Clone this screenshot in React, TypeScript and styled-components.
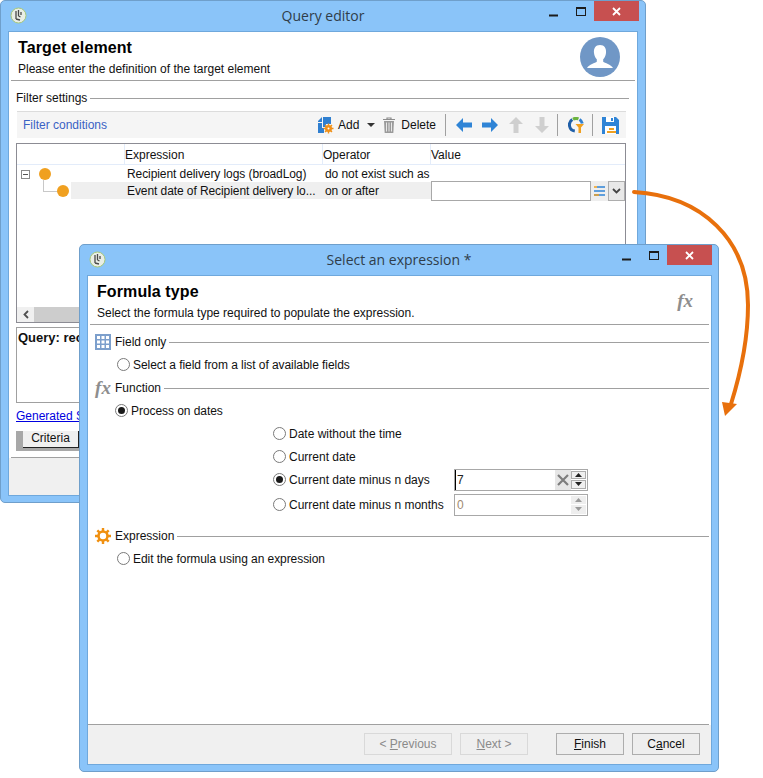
import React from 'react';
import styled, { createGlobalStyle } from 'styled-components';

const GlobalStyle = createGlobalStyle`
  html, body {
    margin: 0;
    padding: 0;
    background: #fff;
  }
  body {
    font-family: "Liberation Sans", "Noto Sans", sans-serif;
    font-size: 12px;
    color: #111;
  }
`;

const Desktop = styled.div`
  position: relative;
  width: 763px;
  height: 778px;
  overflow: hidden;
`;

const Window = styled.div<{ $x: number; $y: number; $w: number; $h: number }>`
  position: absolute;
  left: ${(p) => p.$x}px;
  top: ${(p) => p.$y}px;
  width: ${(p) => p.$w}px;
  height: ${(p) => p.$h}px;
  box-sizing: border-box;
  display: flex;
  flex-direction: column;
  background: #8ac4f9;
  border: 1px solid #6f9fcb;
  border-radius: 5px;
`;

const TitleBar = styled.div`
  flex: none;
  height: 30px;
  display: grid;
  grid-template-columns: 1fr auto 1fr;
  padding: 0 6px;
`;

const AppIcon = styled.svg`
  width: 17px;
  height: 17px;
  margin: 6px 0 0 3px;
`;

const WindowTitle = styled.div`
  font-family: "Open Sans", "Noto Sans", sans-serif;
  font-size: 14px;
  line-height: 30px;
  color: #2f3d4a;
`;

const Controls = styled.div`
  display: flex;
  justify-content: flex-end;
  align-items: flex-start;
`;

const ControlButton = styled.div<{ $close?: boolean }>`
  width: ${(p) => (p.$close ? 45 : 27)}px;
  height: 20px;
  display: flex;
  align-items: center;
  justify-content: center;
  background: ${(p) => (p.$close ? '#c75050' : 'transparent')};
`;

const Client = styled.div<{ $right: number }>`
  flex: 1;
  min-height: 0;
  display: flex;
  flex-direction: column;
  margin: 0 ${(p) => p.$right}px 6px 7px;
  background: #fff;
  border: 1px solid #6fa8dc;
`;

const Banner = styled.div`
  flex: none;
  height: 49px;
  margin: 0 2px;
  padding: 0 7px;
  box-sizing: border-box;
  display: flex;
  justify-content: space-between;
  border-bottom: 1px solid #a0a0a0;
`;

const BannerTitle = styled.div`
  font-size: 16px;
  font-weight: 700;
  letter-spacing: 0.1px;
  line-height: 20px;
  margin-top: 6px;
  color: #000;
`;

const BannerText = styled.div`
  line-height: 16px;
  margin-top: 3px;
`;

const Avatar = styled.svg`
  width: 40px;
  height: 40px;
  margin: 5px 8px 0 0;
`;

const FxMark = styled.span<{ $size: number }>`
  font-family: "Liberation Serif", serif;
  font-style: italic;
  font-weight: 700;
  font-size: ${(p) => p.$size}px;
  line-height: 16px;
  color: #8e8e8e;
`;

const BannerFx = styled.div`
  margin: 17px 9px 0 0;
`;

const QueryBody = styled.div`
  flex: 1;
  min-height: 0;
  display: flex;
  flex-direction: column;
  padding: 0 8px 0 7px;
`;

const Legend = styled.div`
  flex: none;
  height: 19px;
  margin: 7px 0 1px;
  display: flex;
  align-items: center;
  gap: 3px;
  &::after {
    content: '';
    flex: 1;
    margin-top: 2px;
    border-top: 1px solid #a0a0a0;
  }
`;

const Toolbar = styled.div`
  flex: none;
  height: 26px;
  margin: 3px 3px 0 1px;
  padding-left: 6px;
  display: flex;
  align-items: center;
  background: #f5f5f5;
  border-top: 1px solid #dcdcdc;
`;

const ToolbarTitle = styled.span`
  flex: 1;
  color: #3a62c4;
`;

const ToolGroup = styled.div`
  display: flex;
  align-items: center;
  padding-right: 7px;
`;

const ToolLabel = styled.span<{ $left: number }>`
  margin-left: ${(p) => p.$left}px;
`;

const ToolIcon = styled.svg<{ $left: number }>`
  flex: none;
  margin-left: ${(p) => p.$left}px;
`;

const ToolSep = styled.div<{ $left: number }>`
  flex: none;
  width: 1px;
  height: 22px;
  margin-left: ${(p) => p.$left}px;
  background: #a0a0a0;
`;

const Table = styled.div`
  flex: none;
  height: 180px;
  margin: 5px 3px 0 0;
  box-sizing: border-box;
  display: flex;
  flex-direction: column;
  border: 1px solid #8c8c94;
`;

const ColumnGrid = styled.div`
  display: grid;
  grid-template-columns: 108px 198px 108px 1fr;
`;

const HeaderRow = styled(ColumnGrid)`
  flex: none;
  height: 20px;
  grid-template-rows: 20px;
  align-items: stretch;
  border-bottom: 1px solid #e3ecfa;
`;

const HeaderCell = styled.div<{ $last?: boolean }>`
  line-height: 22px;
  border-right: ${(p) => (p.$last ? 'none' : '1px solid #e3ecfa')};
`;

const DataRow = styled(ColumnGrid)`
  flex: none;
  height: 17px;
  grid-template-rows: 17px;
  line-height: 19px;
`;

const TreeCell = styled.div`
  position: relative;
`;

const Cell = styled.div<{ $selected?: boolean }>`
  padding-left: 2px;
  white-space: nowrap;
  letter-spacing: -0.08px;
  background: ${(p) => (p.$selected ? '#efefef' : 'transparent')};
`;

const TreeSelection = styled.div`
  position: absolute;
  left: 54px;
  top: 0;
  right: 0;
  bottom: 0;
  background: #efefef;
`;

const Expander = styled.div`
  position: absolute;
  left: 4px;
  top: 5px;
  width: 9px;
  height: 9px;
  box-sizing: border-box;
  border: 1px solid #8a8a8a;
  &::after {
    content: '';
    position: absolute;
    left: 1px;
    right: 1px;
    top: 3px;
    border-top: 1px solid #555;
  }
`;

const StatusDot = styled.div<{ $left: number }>`
  position: absolute;
  left: ${(p) => p.$left}px;
  top: 3px;
  width: 12px;
  height: 12px;
  border-radius: 50%;
  background: #f0a020;
`;

const TreeLink = styled.div`
  position: absolute;
  left: 26px;
  top: -2px;
  width: 14px;
  height: 11px;
  border-left: 1px solid #c8c8c8;
  border-bottom: 1px solid #c8c8c8;
`;

const ValueCell = styled.div`
  display: flex;
  height: 20px;
  margin-top: -1px;
`;

const ValueInput = styled.div`
  width: 160px;
  box-sizing: border-box;
  background: #fff;
  border: 1px solid #a8a8a8;
`;

const ValueHelper = styled.div`
  width: 17px;
  display: flex;
  align-items: center;
  justify-content: center;
  background: #eee;
`;

const ValueDrop = styled.div`
  width: 17px;
  box-sizing: border-box;
  display: flex;
  align-items: center;
  justify-content: center;
  background: #e8e8e8;
  border: 1px solid #adadad;
`;

const TableFill = styled.div`
  flex: 1;
`;

const ScrollTrack = styled.div`
  flex: none;
  height: 15px;
  display: flex;
  background: #cdcdcd;
`;

const ScrollButton = styled.div`
  width: 17px;
  display: flex;
  align-items: center;
  justify-content: center;
  background: #f0f0f0;
`;

const QueryBox = styled.div`
  flex: none;
  height: 76px;
  margin: 4px 3px 0 0;
  padding: 2px 1px;
  box-sizing: border-box;
  border: 1px solid #a0a0a0;
  font-size: 13px;
  line-height: 15px;
  font-weight: 700;
`;

const LinkText = styled.a`
  flex: none;
  margin-top: 4px;
  line-height: 18px;
  color: #0000e0;
  text-decoration: underline;
`;

const TabStrip = styled.div`
  flex: none;
  height: 20px;
  margin: 6px 3px 0 0;
  padding-left: 7px;
  background: #a8a8a8;
`;

const TabButton = styled.div`
  width: 56px;
  height: 17px;
  box-sizing: border-box;
  text-align: center;
  line-height: 15px;
  background: #f0f0f0;
  border-right: 1px solid #222;
  border-bottom: 1px solid #222;
`;

const Rule = styled.div`
  flex: none;
  margin: 6px -5px 0 -5px;
  border-top: 1px solid #a0a0a0;
`;

const Footer = styled.div`
  flex: 1;
  margin: 0 -8px 0 -7px;
  background: #f0f0f0;
`;

const ExpressionBody = styled.div`
  flex: 1;
  min-height: 0;
  padding: 5px 2px 0 7px;
`;

const SectionRow = styled.div<{ $top?: number }>`
  height: 23px;
  margin-top: ${(p) => p.$top ?? 0}px;
  display: flex;
  align-items: center;
  &::after {
    content: '';
    flex: 1;
    margin: 2px 0 0 3px;
    border-top: 1px solid #a0a0a0;
  }
`;

const SectionIcon = styled.div`
  width: 16px;
  height: 16px;
  margin-right: 4px;
  display: flex;
  align-items: center;
  justify-content: center;
`;

const OptionRow = styled.div<{ $left: number; $gap: number }>`
  height: 23px;
  padding-left: ${(p) => p.$left}px;
  display: flex;
  align-items: center;
  gap: ${(p) => p.$gap}px;
  letter-spacing: -0.06px;
`;

const Radio = styled.span<{ $on?: boolean }>`
  flex: none;
  position: relative;
  width: 13px;
  height: 13px;
  box-sizing: border-box;
  border-radius: 50%;
  border: 1px solid #7a7a7a;
  background: #fff;
  &::after {
    content: '';
    display: ${(p) => (p.$on ? 'block' : 'none')};
    position: absolute;
    left: 2px;
    top: 2px;
    width: 7px;
    height: 7px;
    border-radius: 50%;
    background: #1a1a1a;
  }
`;

const SubRow = styled.div<{ $top?: number }>`
  height: 23px;
  margin: ${(p) => p.$top ?? 0}px 0 0 178px;
  width: 315px;
  display: grid;
  grid-template-columns: 13px 1fr 134px;
  column-gap: 3px;
  align-items: center;
  white-space: nowrap;
`;

const SpinField = styled.div`
  height: 22px;
  box-sizing: border-box;
  display: flex;
  align-items: stretch;
  border: 1px solid #a8a8a8;
`;

const SpinValue = styled.div<{ $muted?: boolean }>`
  flex: 1;
  padding-left: 2px;
  line-height: 20px;
  color: ${(p) => (p.$muted ? '#a08a70' : '#222')};
  ${(p) => (p.$muted ? '' : 'box-shadow: inset 2px 0 0 -1px #000;')}
`;

const SpinClear = styled.div`
  width: 16px;
  display: flex;
  align-items: center;
  justify-content: center;
  background: #e6e6e6;
`;

const SpinButtons = styled.div`
  width: 16px;
  display: flex;
  flex-direction: column;
  gap: 1px;
  padding: 1px 1px 1px 0;
  box-sizing: border-box;
`;

const SpinButton = styled.div<{ $off?: boolean }>`
  flex: 1;
  display: flex;
  align-items: center;
  justify-content: center;
  background: ${(p) => (p.$off ? '#eee' : '#f0f0f0')};
  border: ${(p) => (p.$off ? 'none' : '1px solid #adadad')};
`;

const DialogFooter = styled.div`
  flex: none;
  height: 39px;
  box-sizing: border-box;
  padding: 8px 11px 0 0;
  display: flex;
  justify-content: flex-end;
  background: #f0f0f0;
`;

const FooterRule = styled.div`
  flex: none;
  margin: 0 2px 0 0;
  border-top: 1px solid #a0a0a0;
`;

const DialogButton = styled.div<{ $w: number; $off?: boolean; $left: number }>`
  width: ${(p) => p.$w}px;
  height: 22px;
  margin-left: ${(p) => p.$left}px;
  box-sizing: border-box;
  text-align: center;
  line-height: 20px;
  color: ${(p) => (p.$off ? '#8a8a8a' : '#111')};
  background: ${(p) => (p.$off ? '#efefef' : '#eee')};
  border: 1px solid ${(p) => (p.$off ? '#d9d9d9' : '#adadad')};
`;

const ArrowOverlay = styled.svg`
  position: absolute;
  left: 0;
  top: 0;
  width: 763px;
  height: 778px;
  pointer-events: none;
`;

function CampaignIcon() {
  return (
    <AppIcon viewBox="0 0 17 17">
      <circle cx="8.5" cy="8.5" r="7.5" fill="#e9eee6" stroke="#a7c878" />
      <path d="M6 4v8M8.5 3v6M8.5 9l2 1M6 12l4 1M11 5v3" stroke="#4a4a4a" strokeWidth="1.3" fill="none" />
    </AppIcon>
  );
}

function WindowControls() {
  return (
    <Controls>
      <ControlButton>
        <svg width="9" height="3" viewBox="0 0 9 3" style={{ marginTop: 9 }}>
          <rect width="9" height="2" y="0.5" fill="#1c1c1c" />
        </svg>
      </ControlButton>
      <ControlButton>
        <svg width="10" height="9" viewBox="0 0 10 9">
          <rect x="0.5" y="0.5" width="9" height="8" fill="none" stroke="#1c1c1c" />
          <rect y="0" width="10" height="2" fill="#1c1c1c" />
        </svg>
      </ControlButton>
      <ControlButton $close>
        <svg width="9" height="9" viewBox="0 0 9 9">
          <path d="M1 1l7 7M8 1l-7 7" stroke="#fff" strokeWidth="1.8" />
        </svg>
      </ControlButton>
    </Controls>
  );
}

function AddIcon() {
  return (
    <ToolIcon $left={0} width="16" height="17" viewBox="0 0 16 17">
      <path d="M0 4l4-4v5H0zM5 0h8v7H8v3H5zM0 6h4v5h2v5H0z" fill="#2f7fd0" />
      <path d="M10.5 6.500v10M5.500 11.500h10M7 8l7 7M14 8l-7 7" stroke="#f09018" strokeWidth="1.400" />
      <circle cx="10.500" cy="11.500" r="3.500" fill="#f09018" />
      <circle cx="10.500" cy="11.500" r="1" fill="#fff" />
    </ToolIcon>
  );
}

function TrashIcon() {
  return (
    <ToolIcon $left={7} width="14" height="16" viewBox="0 0 14 16">
      <path d="M1 2.500h12M5 2.500V1h4v1.500" stroke="#8c8c8c" strokeWidth="1.200" fill="none" />
      <path d="M2 4h10l-.7 12H2.700z" fill="#9a9a9a" />
      <path d="M4.500 5.500v9M7 5.500v9M9.500 5.500v9" stroke="#e8e8e8" strokeWidth="1" />
    </ToolIcon>
  );
}

function MoveArrow({ left, turn, color }: { left: number; turn: number; color: string }) {
  return (
    <ToolIcon $left={left} width="16" height="16" viewBox="0 0 16 16">
      <path transform={`rotate(${turn} 8 8)`} d="M0 8l7-7v4.500h9v5H7V15z" fill={color} />
    </ToolIcon>
  );
}

function FilterIcon() {
  return (
    <ToolIcon $left={10} width="16" height="16" viewBox="0 0 16 16">
      <path d="M4.300 2.600a6.300 6.300 0 0 0 2.500 11.500" stroke="#1f5fa8" strokeWidth="3" fill="none" />
      <path d="M5 2.200a6.300 6.300 0 0 1 5.500-.3" stroke="#6cb33f" strokeWidth="3" fill="none" />
      <path d="M11.500 2.500a6.300 6.300 0 0 1 2.800 4" stroke="#2f7fd0" strokeWidth="3" fill="none" />
      <path d="M7.500 7H16l-3 3.500V16h-2.500v-5.500z" fill="#f0a020" />
    </ToolIcon>
  );
}

function SaveIcon() {
  return (
    <ToolIcon $left={9} width="17" height="17" viewBox="0 0 17 17">
      <path d="M0 0h14l3 3v14H0z" fill="#2f84d6" />
      <rect x="4" y="0" width="8" height="5" fill="#fff" />
      <rect x="9" y="1" width="2" height="3" fill="#2f84d6" />
      <rect x="3" y="9" width="11" height="8" fill="#fff" />
      <path d="M7 12h5M5 15h9" stroke="#f0a020" strokeWidth="1.800" />
    </ToolIcon>
  );
}

function Caret({ color = '#333', flip }: { color?: string; flip?: boolean }) {
  return (
    <svg width="7" height="4" viewBox="0 0 7 4">
      <path d={flip ? 'M0 4h7L3.500 0z' : 'M0 0h7L3.500 4z'} fill={color} />
    </svg>
  );
}

function GridIcon() {
  return (
    <svg width="16" height="16" viewBox="0 0 16 16">
      <rect width="16" height="16" fill="#7c9fcc" />
      <path d="M2 2h3v3H2zM6.500 2h3v3h-3zM11 2h3v3h-3zM2 6.500h3v3H2zM6.500 6.500h3v3h-3zM11 6.500h3v3h-3zM2 11h3v3H2zM6.500 11h3v3h-3zM11 11h3v3h-3z" fill="#fff" />
    </svg>
  );
}

function GearIcon() {
  return (
    <svg width="16" height="16" viewBox="0 0 16 16">
      <circle cx="8" cy="8" r="4.500" fill="none" stroke="#f09010" strokeWidth="2.600" />
      <path d="M8 0v3M8 13v3M0 8h3M13 8h3M2.300 2.300l2.100 2.100M11.600 11.600l2.100 2.100M13.700 2.300l-2.100 2.100M4.400 11.600l-2.100 2.100" stroke="#f09010" strokeWidth="2.400" />
    </svg>
  );
}

function QueryEditor() {
  return (
    <Window $x={0} $y={0} $w={646} $h={503}>
      <TitleBar>
        <CampaignIcon />
        <WindowTitle>Query editor</WindowTitle>
        <WindowControls />
      </TitleBar>
      <Client $right={7}>
        <Banner>
          <div>
            <BannerTitle>Target element</BannerTitle>
            <BannerText>Please enter the definition of the target element</BannerText>
          </div>
          <Avatar viewBox="0 0 40 40">
            <circle cx="20" cy="20" r="20" fill="#7097c6" />
            <path d="M20 8c-4.500 0-6.500 3.500-6 8 .3 3 1.500 5 2.800 6.300v2.400c-1.500 1.300-7.800 2.600-9.800 6.300h26c-2-3.700-8.300-5-9.800-6.300v-2.400c1.300-1.300 2.500-3.300 2.800-6.300.5-4.500-1.500-8-6-8z" fill="#fff" />
          </Avatar>
        </Banner>
        <QueryBody>
          <Legend>Filter settings</Legend>
          <Toolbar>
            <ToolbarTitle>Filter conditions</ToolbarTitle>
            <ToolGroup>
              <AddIcon />
              <ToolLabel $left={4}>Add</ToolLabel>
              <ToolIcon $left={8} width="8" height="4" viewBox="0 0 8 4">
                <path d="M0 0h8L4 4z" fill="#333" />
              </ToolIcon>
              <TrashIcon />
              <ToolLabel $left={5}>Delete</ToolLabel>
              <ToolSep $left={9} />
              <MoveArrow left={10} turn={0} color="#2f84d6" />
              <MoveArrow left={10} turn={180} color="#2f84d6" />
              <MoveArrow left={10} turn={90} color="#cfcfcf" />
              <MoveArrow left={10} turn={270} color="#cfcfcf" />
              <ToolSep $left={7} />
              <FilterIcon />
              <ToolSep $left={8} />
              <SaveIcon />
            </ToolGroup>
          </Toolbar>
          <Table>
            <HeaderRow>
              <HeaderCell />
              <HeaderCell>Expression</HeaderCell>
              <HeaderCell>Operator</HeaderCell>
              <HeaderCell $last>Value</HeaderCell>
            </HeaderRow>
            <DataRow>
              <TreeCell>
                <Expander />
                <StatusDot $left={22} />
              </TreeCell>
              <Cell>Recipient delivery logs (broadLog)</Cell>
              <Cell>do not exist such as</Cell>
              <Cell />
            </DataRow>
            <DataRow>
              <TreeCell>
                <TreeSelection />
                <TreeLink />
                <StatusDot $left={40} />
              </TreeCell>
              <Cell $selected>Event date of Recipient delivery lo...</Cell>
              <Cell $selected>on or after</Cell>
              <ValueCell>
                <ValueInput />
                <ValueHelper>
                  <svg width="11" height="10" viewBox="0 0 11 10">
                    <path d="M3 1h8M0 5h11M0 9h11" stroke="#2f84d6" strokeWidth="1.600" />
                    <path d="M0 1h3M0 9h5" stroke="#f0a020" strokeWidth="1.600" />
                  </svg>
                </ValueHelper>
                <ValueDrop>
                  <svg width="9" height="6" viewBox="0 0 9 6">
                    <path d="M1 1l3.500 3.500L8 1" stroke="#444" strokeWidth="1.800" fill="none" />
                  </svg>
                </ValueDrop>
              </ValueCell>
            </DataRow>
            <TableFill />
            <ScrollTrack>
              <ScrollButton>
                <svg width="6" height="9" viewBox="0 0 6 9">
                  <path d="M5 1L1.500 4.500 5 8" stroke="#505050" strokeWidth="1.800" fill="none" />
                </svg>
              </ScrollButton>
            </ScrollTrack>
          </Table>
          <QueryBox>Query: reci</QueryBox>
          <LinkText>Generated SQL</LinkText>
          <TabStrip>
            <TabButton>Criteria</TabButton>
          </TabStrip>
          <Rule />
          <Footer />
        </QueryBody>
      </Client>
    </Window>
  );
}

function SpinArrows({ off }: { off?: boolean }) {
  const color = off ? '#9a9a9a' : '#222';
  return (
    <SpinButtons>
      <SpinButton $off={off}>
        <Caret color={color} flip />
      </SpinButton>
      <SpinButton $off={off}>
        <Caret color={color} />
      </SpinButton>
    </SpinButtons>
  );
}

function SelectExpression() {
  return (
    <Window $x={79} $y={244} $w={640} $h={528}>
      <TitleBar>
        <CampaignIcon />
        <WindowTitle>Select an expression *</WindowTitle>
        <WindowControls />
      </TitleBar>
      <Client $right={6}>
        <Banner>
          <div>
            <BannerTitle>Formula type</BannerTitle>
            <BannerText>Select the formula type required to populate the expression.</BannerText>
          </div>
          <BannerFx>
            <FxMark $size={19}>fx</FxMark>
          </BannerFx>
        </Banner>
        <ExpressionBody>
          <SectionRow>
            <SectionIcon>
              <GridIcon />
            </SectionIcon>
            Field only
          </SectionRow>
          <OptionRow $left={22} $gap={3}>
            <Radio />
            Select a field from a list of available fields
          </OptionRow>
          <SectionRow>
            <SectionIcon>
              <FxMark $size={19}>fx</FxMark>
            </SectionIcon>
            Function
          </SectionRow>
          <OptionRow $left={20} $gap={3}>
            <Radio $on />
            Process on dates
          </OptionRow>
          <SubRow>
            <Radio />
            Date without the time
          </SubRow>
          <SubRow>
            <Radio />
            Current date
          </SubRow>
          <SubRow>
            <Radio $on />
            Current date minus n days
            <SpinField>
              <SpinValue>7</SpinValue>
              <SpinClear>
                <svg width="12" height="12" viewBox="0 0 12 12">
                  <path d="M1 1l10 10M11 1L1 11" stroke="#7d7d7d" strokeWidth="2.200" />
                </svg>
              </SpinClear>
              <SpinArrows />
            </SpinField>
          </SubRow>
          <SubRow $top={2}>
            <Radio />
            Current date minus n months
            <SpinField>
              <SpinValue $muted>0</SpinValue>
              <SpinArrows off />
            </SpinField>
          </SubRow>
          <SectionRow $top={8}>
            <SectionIcon>
              <GearIcon />
            </SectionIcon>
            Expression
          </SectionRow>
          <OptionRow $left={22} $gap={3}>
            <Radio />
            Edit the formula using an expression
          </OptionRow>
        </ExpressionBody>
        <FooterRule />
        <DialogFooter>
          <DialogButton $w={88} $left={0} $off>
            &lt; <u>P</u>revious
          </DialogButton>
          <DialogButton $w={68} $left={8} $off>
            <u>N</u>ext &gt;
          </DialogButton>
          <DialogButton $w={68} $left={28}>
            <u>F</u>inish
          </DialogButton>
          <DialogButton $w={68} $left={8}>
            C<u>a</u>ncel
          </DialogButton>
        </DialogFooter>
      </Client>
    </Window>
  );
}

export default function App() {
  return (
    <Desktop>
      <GlobalStyle />
      <QueryEditor />
      <SelectExpression />
      <ArrowOverlay viewBox="0 0 763 778">
        <path d="M634 192C702 196 748 240 748 305C748 340 741 372 731 404" fill="none" stroke="#e8700c" strokeWidth="4" strokeLinecap="round" />
        <path d="M722 402L737 404L725 416z" fill="#e8700c" />
      </ArrowOverlay>
    </Desktop>
  );
}
